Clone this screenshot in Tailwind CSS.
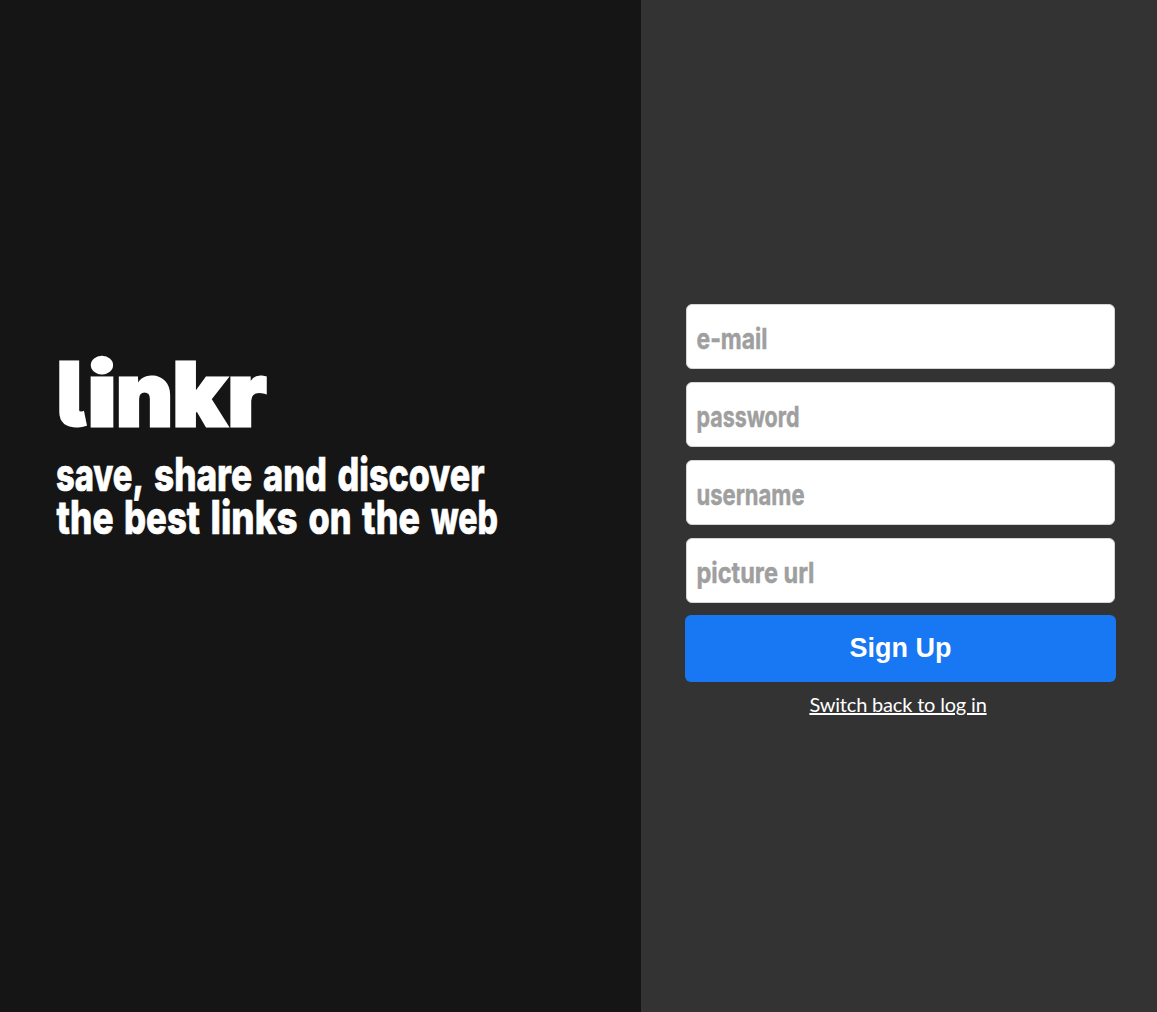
<!DOCTYPE html>
<html lang="en">
<head>
<meta charset="utf-8">
<title>linkr</title>
<script src="https://cdn.jsdelivr.net/npm/@tailwindcss/browser@4"></script>
</head>
<body class="flex h-screen overflow-hidden bg-[#333333] font-['Inter',sans-serif]">
  <section class="flex h-full w-[641px] shrink-0 flex-col bg-[#151515] pt-[350px] pl-14">
    <h1>
      <svg class="block h-[90px] w-[240px] overflow-visible fill-white stroke-white stroke-[3px] text-[88px] font-black [font-feature-settings:'cv05']" role="img" aria-label="linkr">
        <text y="75.5"><tspan x="0.5" textLength="29" lengthAdjust="spacingAndGlyphs">l</tspan><tspan x="31.5" textLength="29" lengthAdjust="spacingAndGlyphs">i</tspan><tspan x="60" textLength="57" lengthAdjust="spacingAndGlyphs">n</tspan><tspan x="116.5" textLength="54" lengthAdjust="spacingAndGlyphs">k</tspan><tspan x="171.5" textLength="39" lengthAdjust="spacingAndGlyphs">r</tspan></text>
      </svg>
    </h1>
    <h2>
      <svg class="block h-[110px] w-[460px] overflow-visible fill-white stroke-white stroke-[0.7px] text-[46.5px] font-extrabold" role="img" aria-label="save, share and discover the best links on the web">
        <text y="50.5"><tspan x="0" textLength="88" lengthAdjust="spacingAndGlyphs">save,</tspan><tspan x="98" textLength="98" lengthAdjust="spacingAndGlyphs">share</tspan><tspan x="207" textLength="64" lengthAdjust="spacingAndGlyphs">and</tspan><tspan x="281.5" textLength="147" lengthAdjust="spacingAndGlyphs">discover</tspan></text>
        <text y="93.5"><tspan x="0.5" textLength="57" lengthAdjust="spacingAndGlyphs">the</tspan><tspan x="68" textLength="76" lengthAdjust="spacingAndGlyphs">best</tspan><tspan x="154.5" textLength="87" lengthAdjust="spacingAndGlyphs">links</tspan><tspan x="252.5" textLength="43" lengthAdjust="spacingAndGlyphs">on</tspan><tspan x="306" textLength="58" lengthAdjust="spacingAndGlyphs">the</tspan><tspan x="375" textLength="67" lengthAdjust="spacingAndGlyphs">web</tspan></text>
      </svg>
    </h2>
  </section>
  <main class="flex h-full grow flex-col pt-[304px] pr-[41px] pl-11">
    <form class="flex flex-col">
      <div class="ml-px flex flex-col gap-[13px] pr-px fill-[#9f9f9f] stroke-[#9f9f9f] stroke-[0.5px] text-[29px] font-bold">
        <div class="h-[65px] rounded-md border border-[#d5d5d5] bg-white pl-[9px]"><svg class="block h-full w-40"><text x="0.5" y="43.5" textLength="71" lengthAdjust="spacingAndGlyphs">e-mail</text></svg></div>
        <div class="h-[65px] rounded-md border border-[#d5d5d5] bg-white pl-[9px]"><svg class="block h-full w-40"><text x="0.5" y="43.5" textLength="103" lengthAdjust="spacingAndGlyphs">password</text></svg></div>
        <div class="h-[65px] rounded-md border border-[#d5d5d5] bg-white pl-[9px]"><svg class="block h-full w-40"><text x="0.5" y="43.5" textLength="108" lengthAdjust="spacingAndGlyphs">username</text></svg></div>
        <div class="h-[65px] rounded-md border border-[#d5d5d5] bg-white pl-[9px]"><svg class="block h-full w-40"><text x="0.5" y="43.5" textLength="118" lengthAdjust="spacingAndGlyphs">picture url</text></svg></div>
      </div>
      <button type="button" class="mt-3 h-[67px] rounded-md bg-[#1877f2] pb-px font-['Liberation_Sans',sans-serif] text-[27px] font-bold text-white">Sign Up</button>
    </form>
    <a href="#" class="mt-[7px] mr-[5px] self-center font-['Lato',sans-serif] text-[20px] leading-[30px] tracking-[-0.18px] text-white underline">Switch back to log in</a>
  </main>
</body>
</html>
